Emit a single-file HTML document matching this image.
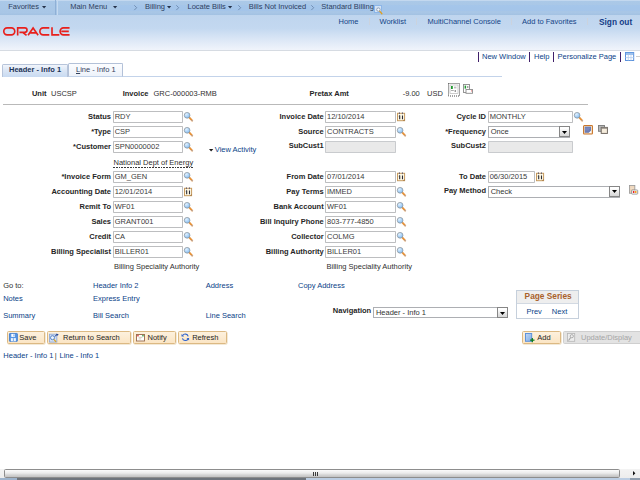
<!DOCTYPE html>
<html><head><meta charset="utf-8"><title>Standard Billing</title><style>
html,body{margin:0;padding:0}
body{width:640px;height:480px;overflow:hidden;background:#fff;position:relative;font-family:"Liberation Sans",sans-serif;font-size:7.5px;color:#303030}
*{box-sizing:border-box}
.a{position:absolute;white-space:nowrap;line-height:12px;height:12px}
.b{font-weight:bold;color:#262626}
.r{text-align:right}
.lk{color:#0b3f88}
.nv{color:#2d405f;font-size:7.5px}
.in{position:absolute;height:11.5px;border:1px solid #bdbec0;border-radius:.8px;background:#fff;line-height:8.8px;padding-left:.8px;color:#3f3f3f;white-space:nowrap;overflow:hidden}
.dis{background:#e9e9e9;border-color:#c9cbce}
.sel{position:absolute;height:11.7px;border:1px solid #adafb3;background:#fff;line-height:9.6px;padding-left:2.4px;color:#3c3c3c;white-space:nowrap}
.sel i{position:absolute;right:-1px;top:-.6px;bottom:-.6px;width:11px;border:1px solid #868686;background:linear-gradient(#fff 15%,#e9e9e9 55%,#d6d6d6)}
.sel i svg{left:2px;top:3.4px}
.btn{position:absolute;top:331px;height:12.7px;border:1px solid #dcb983;background:linear-gradient(#fdf1de,#fbe5c4);border-radius:1.5px;line-height:10.5px;color:#222;white-space:nowrap;font-size:7.5px;box-shadow:.5px .5px 0 #e8d3b0}
.btn.d{border-color:#cfcfcf;background:#e3e3e3;color:#a9a9a9;box-shadow:none}
svg{position:absolute;overflow:visible}
.sep{position:absolute;width:1px;background:#40206a}
</style></head>
<body>
<svg width="0" height="0" style="left:0;top:0"><defs><radialGradient id="lg" cx=".35" cy=".3" r=".8"><stop offset="0" stop-color="#e4f2fe"/><stop offset=".6" stop-color="#a3cff8"/><stop offset="1" stop-color="#7db8f0"/></radialGradient></defs></svg>
<div style="position:absolute;left:0;top:0;width:640px;height:15px;background:linear-gradient(#abc9e8,#a8c6e6 85%,#a2c1e2)"></div>
<div style="position:absolute;left:0;top:0;width:640px;height:1px;background:#c3d8ef"></div>
<div style="position:absolute;left:0;top:15px;width:640px;height:35px;background:linear-gradient(#bfd5ee 0%,#c3d8f0 38%,#d0e0f3 55%,#dfe9f7 75%,#f0f4fb 100%)"></div>
<div style="position:absolute;left:0;top:49.6px;width:640px;height:1px;background:#d6dbe2"></div>
<div style="position:absolute;left:120px;top:4.6px;width:520px;height:6px;background:rgba(150,190,245,.25)"></div>
<div style="position:absolute;left:55px;top:0;width:1px;height:15px;background:#8fb0d6"></div>
<div style="position:absolute;left:56.6px;top:0;width:1px;height:15px;background:#c6daf0"></div>
<div class="a nv" style="left:8.2px;top:1px;">Favorites</div>
<svg style="left:42px;top:6.1px" width="4.2" height="2.5" viewBox="0 0 4.2 2.5"><path d="M0 0h4.2L2.1 2.5z" fill="#25324a"/></svg>
<div class="a nv" style="left:70.2px;top:1px;">Main Menu</div>
<svg style="left:113px;top:6.1px" width="4.2" height="2.5" viewBox="0 0 4.2 2.5"><path d="M0 0h4.2L2.1 2.5z" fill="#25324a"/></svg>
<svg style="left:133.5px;top:4.6px" width="3" height="5.4" viewBox="0 0 3 5.4"><path d="M.3 .3L2.7 2.7L.3 5.1" fill="none" stroke="#6580a5" stroke-width=".8"/></svg>
<div class="a nv" style="left:145px;top:1px;">Billing</div>
<svg style="left:167px;top:6.1px" width="4.2" height="2.5" viewBox="0 0 4.2 2.5"><path d="M0 0h4.2L2.1 2.5z" fill="#25324a"/></svg>
<svg style="left:176px;top:4.6px" width="3" height="5.4" viewBox="0 0 3 5.4"><path d="M.3 .3L2.7 2.7L.3 5.1" fill="none" stroke="#6580a5" stroke-width=".8"/></svg>
<div class="a nv" style="left:187.5px;top:1px;">Locate Bills</div>
<svg style="left:228px;top:6.1px" width="4.2" height="2.5" viewBox="0 0 4.2 2.5"><path d="M0 0h4.2L2.1 2.5z" fill="#25324a"/></svg>
<svg style="left:237.5px;top:4.6px" width="3" height="5.4" viewBox="0 0 3 5.4"><path d="M.3 .3L2.7 2.7L.3 5.1" fill="none" stroke="#6580a5" stroke-width=".8"/></svg>
<div class="a nv" style="left:248.7px;top:1px;">Bills Not Invoiced</div>
<svg style="left:310.7px;top:4.6px" width="3" height="5.4" viewBox="0 0 3 5.4"><path d="M.3 .3L2.7 2.7L.3 5.1" fill="none" stroke="#6580a5" stroke-width=".8"/></svg>
<div class="a nv" style="left:321.3px;top:1px;">Standard Billing</div>
<div style="position:absolute;left:374px;top:5px;width:8px;height:8px;background:#d3e3f6;border:1px solid #8db6e8"></div>
<svg style="left:375.6px;top:6.6px" width="6.4" height="7.2" viewBox="0 0 6.4 7.2"><line x1="3.5" y1="3.9" x2="5.9" y2="6.8" stroke="#e0a020" stroke-width="1.3" stroke-linecap="round"/><circle cx="2.4" cy="2.6" r="1.7" fill="#f4f8fd" stroke="#7d8ea6" stroke-width=".8"/></svg>
<div class="a " style="left:338.5px;top:16px;color:#144486;font-size:7.5px">Home</div>
<div class="a " style="left:379.5px;top:16px;color:#144486;font-size:7.5px">Worklist</div>
<div class="a " style="left:427.5px;top:16px;color:#144486;font-size:7.5px">MultiChannel Console</div>
<div class="a " style="left:522px;top:16px;color:#144486;font-size:7.5px">Add to Favorites</div>
<div class="a " style="left:599px;top:16px;color:#143c86;font-weight:bold;font-size:8.3px">Sign out</div>
<div style="position:absolute;left:368.5px;top:17.5px;width:1px;height:7px;background:#cbd3de"></div>
<div style="position:absolute;left:415.6px;top:17.5px;width:1px;height:7px;background:#cbd3de"></div>
<div style="position:absolute;left:510.6px;top:17.5px;width:1px;height:7px;background:#cbd3de"></div>
<div style="position:absolute;left:587.2px;top:17.5px;width:1px;height:7px;background:#cbd3de"></div>
<svg style="left:3px;top:27.3px" width="65.6" height="9" viewBox="0 0 68 9" preserveAspectRatio="none"><g fill="none" stroke="#e8201c" stroke-width="1.7"><rect x=".8" y=".8" width="11.4" height="7" rx="3.5"/><path d="M15.2 8.4V.8h7.4a2.3 2.3 0 0 1 0 4.6h-5.6M20.4 5.4l4 3"/><path d="M26 8.2L31.2 .9l5.2 7.3M28.2 5.9h6.6"/><path d="M48 .8h-6.3a3.5 3.5 0 0 0 0 7h6.3"/><path d="M50.8 .2v7.6h7.6"/><path d="M69 .8h-6.3a3.5 3.5 0 0 0 0 7h6.3M60.4 4.3h7.8"/></g></svg>
<div class="a lk" style="left:482px;top:51px;">New Window</div>
<div class="a lk" style="left:534px;top:51px;">Help</div>
<div class="a lk" style="left:557.5px;top:51px;">Personalize Page</div>
<div class="sep" style="left:478.3px;top:52px;height:10px"></div>
<div class="sep" style="left:529.3px;top:52px;height:10px"></div>
<div class="sep" style="left:552.8px;top:52px;height:10px"></div>
<div class="sep" style="left:620.3px;top:52px;height:10px"></div>
<svg style="left:625px;top:52px" width="9.2" height="9" viewBox="0 0 9.2 9"><rect x=".5" y=".5" width="8.2" height="8" fill="#fff" stroke="#5b92dc" stroke-width="1"/><rect x=".5" y=".5" width="8.2" height="2.2" fill="#6aa0e4"/><path d="M1 1.7h7.2" stroke="#d6e6fa" stroke-width=".6"/><path d="M.5 5.6h8.2M3.3 2.7v5.8M6 2.7v5.8" stroke="#b5cef0" stroke-width=".8"/></svg><div style="position:absolute;left:635.5px;top:55.8px;width:4.5px;height:1px;background:#cfcfcf"></div>
<div style="position:absolute;left:2px;top:76px;width:500px;height:1px;background:#c3d3ea"></div>
<div style="position:absolute;left:2px;top:64px;width:66px;height:13px;border:1px solid #b7c4da;border-bottom:none;border-radius:1.5px 1.5px 0 0;background:linear-gradient(#f1f5fb,#dbe6f5 45%,#c8daf1)"></div>
<div style="position:absolute;left:68px;top:63px;width:55px;height:14px;border:1px solid #b3c1d8;border-bottom:1px solid #c3d3ea;border-radius:1.5px 1.5px 0 0;background:linear-gradient(#fcfdff,#edf2fa)"></div>
<div class="a " style="left:9px;top:64px;font-weight:bold;color:#1d3357">Header - Info 1</div>
<div class="a " style="left:76px;top:64px;color:#33415c"><u>L</u>ine - Info 1</div>
<div class="a r b" style="left:-153.5px;width:200px;top:88px;">Unit</div>
<div class="a " style="left:51px;top:88px;">USCSP</div>
<div class="a r b" style="left:-51.5px;width:200px;top:88px;">Invoice</div>
<div class="a " style="left:153.5px;top:88px;">GRC-000003-RMB</div>
<div class="a b" style="left:309.5px;top:88px;">Pretax Amt</div>
<div class="a r " style="left:219.8px;width:200px;top:88px;">-9.00</div>
<div class="a " style="left:427px;top:88px;">USD</div>
<svg style="left:448px;top:83.2px" width="12" height="13.5" viewBox="0 0 12 13.5"><rect x=".5" y=".5" width="11" height="12.5" fill="#fff" stroke="#333" stroke-width=".9" stroke-dasharray="1 1"/><rect x="2" y="2" width="8" height="8.5" fill="#fff" stroke="#b8b8b8" stroke-width=".7"/><rect x="3" y="3" width="1.8" height="3" fill="#1f9a2e"/><rect x="6" y="3.6" width="2.4" height="1.8" fill="#bbb"/><rect x="3" y="7" width="2.8" height=".8" fill="#999"/><rect x="6.6" y="7" width="1.4" height="2" fill="#999"/></svg>
<svg style="left:463px;top:84px" width="10" height="10" viewBox="0 0 10 10"><rect x=".5" y=".5" width="6" height="8" fill="#fff" stroke="#8a8a8a" stroke-width=".9"/><rect x="1.6" y="1.6" width="1.5" height="3" fill="#1f9a2e"/><rect x="4" y="2.2" width="1.4" height="1.6" fill="#888"/><rect x="3" y="5.5" width="6.5" height="3.8" fill="#fff" stroke="#8a8a8a" stroke-width=".9"/><rect x="8" y="6.2" width=".9" height="1.4" fill="#e88"/></svg>
<div style="position:absolute;left:3px;top:104px;width:585px;height:1px;background:#b9b9b9"></div>
<div class="a r b" style="left:-89px;width:200px;top:111px;">Status</div>
<div class="in " style="left:113px;top:111.1px;width:70px"></div>
<div class="a" style="left:114.7px;top:111px;color:#3a3a3a">RDY</div>
<svg style="left:184px;top:112.3px" width="9" height="10" viewBox="0 0 9 10"><line x1="5.2" y1="5.4" x2="8.2" y2="8.6" stroke="#e6923a" stroke-width="1.9" stroke-linecap="round"/><circle cx="8.1" cy="8.6" r=".7" fill="#a9b0c8"/><circle cx="3.1" cy="3.3" r="2.85" fill="url(#lg)" stroke="#8f989f" stroke-width=".8"/></svg>
<div class="a r b" style="left:-89px;width:200px;top:126px;">*Type</div>
<div class="in " style="left:113px;top:126.1px;width:70px"></div>
<div class="a" style="left:114.7px;top:126px;color:#3a3a3a">CSP</div>
<svg style="left:184px;top:127.3px" width="9" height="10" viewBox="0 0 9 10"><line x1="5.2" y1="5.4" x2="8.2" y2="8.6" stroke="#e6923a" stroke-width="1.9" stroke-linecap="round"/><circle cx="8.1" cy="8.6" r=".7" fill="#a9b0c8"/><circle cx="3.1" cy="3.3" r="2.85" fill="url(#lg)" stroke="#8f989f" stroke-width=".8"/></svg>
<div class="a r b" style="left:-89px;width:200px;top:141px;">*Customer</div>
<div class="in " style="left:113px;top:141.1px;width:70px"></div>
<div class="a" style="left:114.7px;top:141px;color:#3a3a3a">SPN0000002</div>
<svg style="left:184px;top:142.29999999999998px" width="9" height="10" viewBox="0 0 9 10"><line x1="5.2" y1="5.4" x2="8.2" y2="8.6" stroke="#e6923a" stroke-width="1.9" stroke-linecap="round"/><circle cx="8.1" cy="8.6" r=".7" fill="#a9b0c8"/><circle cx="3.1" cy="3.3" r="2.85" fill="url(#lg)" stroke="#8f989f" stroke-width=".8"/></svg>
<div class="a r b" style="left:-89px;width:200px;top:171px;">*Invoice Form</div>
<div class="in " style="left:113px;top:171.1px;width:70px"></div>
<div class="a" style="left:114.7px;top:171px;color:#3a3a3a">GM_GEN</div>
<svg style="left:184px;top:172.29999999999998px" width="9" height="10" viewBox="0 0 9 10"><line x1="5.2" y1="5.4" x2="8.2" y2="8.6" stroke="#e6923a" stroke-width="1.9" stroke-linecap="round"/><circle cx="8.1" cy="8.6" r=".7" fill="#a9b0c8"/><circle cx="3.1" cy="3.3" r="2.85" fill="url(#lg)" stroke="#8f989f" stroke-width=".8"/></svg>
<div class="a r b" style="left:-89px;width:200px;top:186px;">Accounting Date</div>
<div class="in " style="left:113px;top:186.1px;width:70px"></div>
<div class="a" style="left:114.7px;top:186px;color:#3a3a3a">12/01/2014</div>
<svg style="left:184px;top:187.0px" width="8.2" height="9.3" viewBox="0 0 8.2 9.3"><rect x=".5" y="1.3" width="7.1" height="7.4" fill="#fffae6" stroke="#c79b60" stroke-width="1"/><rect x="1.9" y=".4" width="1.1" height="1.7" fill="#6b6570"/><rect x="4.9" y=".4" width="1.1" height="1.7" fill="#6b6570"/><path d="M2.7 3.5v3.7M5.5 3.5v3.7" stroke="#2b2b35" stroke-width="1.1" fill="none"/><path d="M1.8 4.1l.9-.6" stroke="#1d1d27" stroke-width=".7"/><path d="M5.9 8.7l1.7-1.7v1.7z" fill="#9c6b38"/></svg>
<div class="a r b" style="left:-89px;width:200px;top:201px;">Remit To</div>
<div class="in " style="left:113px;top:201.1px;width:70px"></div>
<div class="a" style="left:114.7px;top:201px;color:#3a3a3a">WF01</div>
<svg style="left:184px;top:202.29999999999998px" width="9" height="10" viewBox="0 0 9 10"><line x1="5.2" y1="5.4" x2="8.2" y2="8.6" stroke="#e6923a" stroke-width="1.9" stroke-linecap="round"/><circle cx="8.1" cy="8.6" r=".7" fill="#a9b0c8"/><circle cx="3.1" cy="3.3" r="2.85" fill="url(#lg)" stroke="#8f989f" stroke-width=".8"/></svg>
<div class="a r b" style="left:-89px;width:200px;top:216px;">Sales</div>
<div class="in " style="left:113px;top:216.1px;width:70px"></div>
<div class="a" style="left:114.7px;top:216px;color:#3a3a3a">GRANT001</div>
<svg style="left:184px;top:217.29999999999998px" width="9" height="10" viewBox="0 0 9 10"><line x1="5.2" y1="5.4" x2="8.2" y2="8.6" stroke="#e6923a" stroke-width="1.9" stroke-linecap="round"/><circle cx="8.1" cy="8.6" r=".7" fill="#a9b0c8"/><circle cx="3.1" cy="3.3" r="2.85" fill="url(#lg)" stroke="#8f989f" stroke-width=".8"/></svg>
<div class="a r b" style="left:-89px;width:200px;top:231px;">Credit</div>
<div class="in " style="left:113px;top:231.1px;width:70px"></div>
<div class="a" style="left:114.7px;top:231px;color:#3a3a3a">CA</div>
<svg style="left:184px;top:232.29999999999998px" width="9" height="10" viewBox="0 0 9 10"><line x1="5.2" y1="5.4" x2="8.2" y2="8.6" stroke="#e6923a" stroke-width="1.9" stroke-linecap="round"/><circle cx="8.1" cy="8.6" r=".7" fill="#a9b0c8"/><circle cx="3.1" cy="3.3" r="2.85" fill="url(#lg)" stroke="#8f989f" stroke-width=".8"/></svg>
<div class="a r b" style="left:-89px;width:200px;top:246px;">Billing Specialist</div>
<div class="in " style="left:113px;top:246.1px;width:70px"></div>
<div class="a" style="left:114.7px;top:246px;color:#3a3a3a">BILLER01</div>
<svg style="left:184px;top:247.29999999999998px" width="9" height="10" viewBox="0 0 9 10"><line x1="5.2" y1="5.4" x2="8.2" y2="8.6" stroke="#e6923a" stroke-width="1.9" stroke-linecap="round"/><circle cx="8.1" cy="8.6" r=".7" fill="#a9b0c8"/><circle cx="3.1" cy="3.3" r="2.85" fill="url(#lg)" stroke="#8f989f" stroke-width=".8"/></svg>
<div class="a " style="left:113.5px;top:157px;">National Dept of Energy</div>
<div style="position:absolute;left:113.2px;top:167px;width:80px;height:1px;background:repeating-linear-gradient(90deg,#3a3a3a 0,#3a3a3a 1.9px,transparent 1.9px,transparent 2.8px)"></div>
<div class="a " style="left:113.9px;top:261px;">Billing Speciality Authority</div>
<svg style="left:208.9px;top:149.0px" width="4.3" height="2.6" viewBox="0 0 4.3 2.6"><path d="M0 0h4.3L2.15 2.6z" fill="#1a1a1a"/></svg>
<div class="a lk" style="left:214.8px;top:144px;">View Activity</div>
<div class="a r b" style="left:123.7px;width:200px;top:111px;">Invoice Date</div>
<div class="in " style="left:325.3px;top:111.1px;width:70.3px"></div>
<div class="a" style="left:327.0px;top:111px;color:#3a3a3a">12/10/2014</div>
<svg style="left:397px;top:112.0px" width="8.2" height="9.3" viewBox="0 0 8.2 9.3"><rect x=".5" y="1.3" width="7.1" height="7.4" fill="#fffae6" stroke="#c79b60" stroke-width="1"/><rect x="1.9" y=".4" width="1.1" height="1.7" fill="#6b6570"/><rect x="4.9" y=".4" width="1.1" height="1.7" fill="#6b6570"/><path d="M2.7 3.5v3.7M5.5 3.5v3.7" stroke="#2b2b35" stroke-width="1.1" fill="none"/><path d="M1.8 4.1l.9-.6" stroke="#1d1d27" stroke-width=".7"/><path d="M5.9 8.7l1.7-1.7v1.7z" fill="#9c6b38"/></svg>
<div class="a r b" style="left:123.7px;width:200px;top:126px;">Source</div>
<div class="in " style="left:325.3px;top:126.1px;width:70.3px"></div>
<div class="a" style="left:327.0px;top:126px;color:#3a3a3a">CONTRACTS</div>
<svg style="left:397px;top:127.3px" width="9" height="10" viewBox="0 0 9 10"><line x1="5.2" y1="5.4" x2="8.2" y2="8.6" stroke="#e6923a" stroke-width="1.9" stroke-linecap="round"/><circle cx="8.1" cy="8.6" r=".7" fill="#a9b0c8"/><circle cx="3.1" cy="3.3" r="2.85" fill="url(#lg)" stroke="#8f989f" stroke-width=".8"/></svg>
<div class="a r b" style="left:123.7px;width:200px;top:140px;">SubCust1</div>
<div class="in dis" style="left:325.3px;top:141.1px;width:70.3px"></div>
<div class="a r b" style="left:123.7px;width:200px;top:171px;">From Date</div>
<div class="in " style="left:325.3px;top:171.1px;width:70.3px"></div>
<div class="a" style="left:327.0px;top:171px;color:#3a3a3a">07/01/2014</div>
<svg style="left:397px;top:172.0px" width="8.2" height="9.3" viewBox="0 0 8.2 9.3"><rect x=".5" y="1.3" width="7.1" height="7.4" fill="#fffae6" stroke="#c79b60" stroke-width="1"/><rect x="1.9" y=".4" width="1.1" height="1.7" fill="#6b6570"/><rect x="4.9" y=".4" width="1.1" height="1.7" fill="#6b6570"/><path d="M2.7 3.5v3.7M5.5 3.5v3.7" stroke="#2b2b35" stroke-width="1.1" fill="none"/><path d="M1.8 4.1l.9-.6" stroke="#1d1d27" stroke-width=".7"/><path d="M5.9 8.7l1.7-1.7v1.7z" fill="#9c6b38"/></svg>
<div class="a r b" style="left:123.7px;width:200px;top:186px;">Pay Terms</div>
<div class="in " style="left:325.3px;top:186.1px;width:70.3px"></div>
<div class="a" style="left:327.0px;top:186px;color:#3a3a3a">IMMED</div>
<svg style="left:397px;top:187.29999999999998px" width="9" height="10" viewBox="0 0 9 10"><line x1="5.2" y1="5.4" x2="8.2" y2="8.6" stroke="#e6923a" stroke-width="1.9" stroke-linecap="round"/><circle cx="8.1" cy="8.6" r=".7" fill="#a9b0c8"/><circle cx="3.1" cy="3.3" r="2.85" fill="url(#lg)" stroke="#8f989f" stroke-width=".8"/></svg>
<div class="a r b" style="left:123.7px;width:200px;top:201px;">Bank Account</div>
<div class="in " style="left:325.3px;top:201.1px;width:70.3px"></div>
<div class="a" style="left:327.0px;top:201px;color:#3a3a3a">WF01</div>
<svg style="left:397px;top:202.29999999999998px" width="9" height="10" viewBox="0 0 9 10"><line x1="5.2" y1="5.4" x2="8.2" y2="8.6" stroke="#e6923a" stroke-width="1.9" stroke-linecap="round"/><circle cx="8.1" cy="8.6" r=".7" fill="#a9b0c8"/><circle cx="3.1" cy="3.3" r="2.85" fill="url(#lg)" stroke="#8f989f" stroke-width=".8"/></svg>
<div class="a r b" style="left:123.7px;width:200px;top:216px;">Bill Inquiry Phone</div>
<div class="in " style="left:325.3px;top:216.1px;width:70.3px"></div>
<div class="a" style="left:327.0px;top:216px;color:#3a3a3a">803-777-4850</div>
<svg style="left:397px;top:217.29999999999998px" width="9" height="10" viewBox="0 0 9 10"><line x1="5.2" y1="5.4" x2="8.2" y2="8.6" stroke="#e6923a" stroke-width="1.9" stroke-linecap="round"/><circle cx="8.1" cy="8.6" r=".7" fill="#a9b0c8"/><circle cx="3.1" cy="3.3" r="2.85" fill="url(#lg)" stroke="#8f989f" stroke-width=".8"/></svg>
<div class="a r b" style="left:123.7px;width:200px;top:231px;">Collector</div>
<div class="in " style="left:325.3px;top:231.1px;width:70.3px"></div>
<div class="a" style="left:327.0px;top:231px;color:#3a3a3a">COLMG</div>
<svg style="left:397px;top:232.29999999999998px" width="9" height="10" viewBox="0 0 9 10"><line x1="5.2" y1="5.4" x2="8.2" y2="8.6" stroke="#e6923a" stroke-width="1.9" stroke-linecap="round"/><circle cx="8.1" cy="8.6" r=".7" fill="#a9b0c8"/><circle cx="3.1" cy="3.3" r="2.85" fill="url(#lg)" stroke="#8f989f" stroke-width=".8"/></svg>
<div class="a r b" style="left:123.7px;width:200px;top:246px;">Billing Authority</div>
<div class="in " style="left:325.3px;top:246.1px;width:70.3px"></div>
<div class="a" style="left:327.0px;top:246px;color:#3a3a3a">BILLER01</div>
<svg style="left:397px;top:247.29999999999998px" width="9" height="10" viewBox="0 0 9 10"><line x1="5.2" y1="5.4" x2="8.2" y2="8.6" stroke="#e6923a" stroke-width="1.9" stroke-linecap="round"/><circle cx="8.1" cy="8.6" r=".7" fill="#a9b0c8"/><circle cx="3.1" cy="3.3" r="2.85" fill="url(#lg)" stroke="#8f989f" stroke-width=".8"/></svg>
<div class="a " style="left:326.5px;top:261px;">Billing Speciality Authority</div>
<div class="a r b" style="left:286px;width:200px;top:111px;">Cycle ID</div>
<div class="in " style="left:488px;top:111.1px;width:84.8px"></div>
<div class="a" style="left:489.7px;top:111px;color:#3a3a3a">MONTHLY</div>
<svg style="left:574px;top:112.3px" width="9" height="10" viewBox="0 0 9 10"><line x1="5.2" y1="5.4" x2="8.2" y2="8.6" stroke="#e6923a" stroke-width="1.9" stroke-linecap="round"/><circle cx="8.1" cy="8.6" r=".7" fill="#a9b0c8"/><circle cx="3.1" cy="3.3" r="2.85" fill="url(#lg)" stroke="#8f989f" stroke-width=".8"/></svg>
<div class="a r b" style="left:286px;width:200px;top:126px;">*Frequency</div>
<div class="sel" style="left:488px;top:126px;width:82px"><i><svg width="5" height="3" viewBox="0 0 5 3"><path d="M0 0h5L2.5 3z" fill="#000"/></svg></i></div>
<div class="a " style="left:490.7px;top:126px;color:#333">Once</div>
<div class="a r b" style="left:286px;width:200px;top:140px;">SubCust2</div>
<div class="in dis" style="left:488px;top:141.1px;width:84.8px"></div>
<div class="a r b" style="left:286px;width:200px;top:171px;">To Date</div>
<div class="in " style="left:488px;top:171.1px;width:46.5px"></div>
<div class="a" style="left:489.7px;top:171px;color:#3a3a3a">06/30/2015</div>
<svg style="left:536px;top:172.0px" width="8.2" height="9.3" viewBox="0 0 8.2 9.3"><rect x=".5" y="1.3" width="7.1" height="7.4" fill="#fffae6" stroke="#c79b60" stroke-width="1"/><rect x="1.9" y=".4" width="1.1" height="1.7" fill="#6b6570"/><rect x="4.9" y=".4" width="1.1" height="1.7" fill="#6b6570"/><path d="M2.7 3.5v3.7M5.5 3.5v3.7" stroke="#2b2b35" stroke-width="1.1" fill="none"/><path d="M1.8 4.1l.9-.6" stroke="#1d1d27" stroke-width=".7"/><path d="M5.9 8.7l1.7-1.7v1.7z" fill="#9c6b38"/></svg>
<div class="a r b" style="left:286px;width:200px;top:185px;">Pay Method</div>
<div class="sel" style="left:488px;top:185.6px;width:132px;height:12px"><i><svg width="5" height="3" viewBox="0 0 5 3"><path d="M0 0h5L2.5 3z" fill="#000"/></svg></i></div>
<div class="a " style="left:490.7px;top:186px;color:#333">Check</div>
<svg style="left:583px;top:125px" width="10" height="9.6" viewBox="0 0 10 9.6"><rect x=".55" y=".55" width="8.9" height="8.5" rx=".8" fill="#f7e3c6" stroke="#c9762c" stroke-width="1.05"/><rect x="1.7" y="1.6" width="6.3" height="6.2" fill="#6c7cb3"/><path d="M2 3.2h5M2 4.8h4" stroke="#8d9bd0" stroke-width=".6"/><path d="M5.6 7.9l2.5-2.5v2.5z" fill="#fff"/></svg>
<svg style="left:598.2px;top:125.3px" width="10" height="9" viewBox="0 0 10 9"><rect x=".5" y=".5" width="6" height="5.8" fill="#b9b9b9" stroke="#7a7a7a" stroke-width=".9"/><rect x="3.2" y="2.4" width="6.2" height="6" fill="#f5ecdc" stroke="#6a625a" stroke-width=".95"/><rect x="3.2" y="2.4" width="6.2" height="1.3" fill="#8a857f"/></svg>
<svg style="left:628.9px;top:185.2px" width="9.2" height="9.6" viewBox="0 0 9.2 9.6"><rect x=".45" y=".45" width="5.4" height="7.8" fill="#ecd2b6" stroke="#9a9a9a" stroke-width=".85"/><path d="M1.4 2h3.4M1.4 3.6h3.4" stroke="#f6e6d4" stroke-width=".7"/><rect x="2.6" y="5" width="6.1" height="4.1" rx=".6" fill="#fff" stroke="#8c8c8c" stroke-width=".85"/><rect x="3.9" y="6" width="1.5" height="2" fill="#e5202a"/><rect x="5.9" y="6" width="1.6" height="2" fill="#f1a21c"/></svg>
<div class="a " style="left:3.2px;top:280px;">Go to:</div>
<div class="a lk" style="left:93px;top:280px;">Header Info 2</div>
<div class="a lk" style="left:205.7px;top:280px;">Address</div>
<div class="a lk" style="left:298px;top:280px;">Copy Address</div>
<div class="a lk" style="left:3.2px;top:293px;">Notes</div>
<div class="a lk" style="left:93px;top:293px;">Express Entry</div>
<div class="a lk" style="left:3.2px;top:310px;">Summary</div>
<div class="a lk" style="left:93px;top:310px;">Bill Search</div>
<div class="a lk" style="left:205.7px;top:310px;">Line Search</div>
<div class="a r b" style="left:171.2px;width:200px;top:305px;">Navigation</div>
<div class="sel" style="left:373px;top:307px;width:135px;height:11px"><i><svg width="5" height="3" viewBox="0 0 5 3"><path d="M0 0h5L2.5 3z" fill="#000"/></svg></i></div>
<div class="a " style="left:375.9px;top:307px;color:#333">Header - Info 1</div>
<div style="position:absolute;left:515.6px;top:290.3px;width:63.5px;height:28.6px;border:1px solid #c6d0dc;background:#fff"></div>
<div style="position:absolute;left:516.6px;top:291.3px;width:61.5px;height:13.2px;background:#eeeeee;border-bottom:1px solid #d2d9e2"></div>
<div class="a " style="left:524.6px;top:290px;font-weight:bold;font-size:8.3px;color:#a9612a">Page Series</div>
<div class="a lk" style="left:526.4px;top:306px;">Prev</div>
<div class="a lk" style="left:551.8px;top:306px;">Next</div>
<div class="btn " style="left:7px;width:37.5px"><svg style="left:.9px;top:.9px" width="8.8" height="8.8" viewBox="0 0 8.8 8.8"><rect x=".45" y=".45" width="7.9" height="7.9" rx=".5" fill="#5a97e4" stroke="#3f7ccc" stroke-width=".9"/><rect x="2.3" y=".9" width="3.6" height="3" fill="#fff"/><rect x="4.5" y="1.3" width=".9" height="2" fill="#5a97e4"/><rect x="1.9" y="5.1" width="5" height="3.2" fill="#edf4fc"/><rect x="3.9" y="5.1" width="1" height="3.2" fill="#7fb0ec"/></svg></div>
<div class="a " style="left:19.3px;top:332px;color:#1f1f1f">Save</div>
<div class="btn " style="left:47px;width:83.5px"><svg style="left:1.4px;top:.5px" width="10.4" height="9.6" viewBox="0 0 10.4 9.6"><rect x=".45" y="1.2" width="7.4" height="7.9" fill="#d3dff3" stroke="#93abd6" stroke-width=".9"/><circle cx="3.5" cy="4.7" r="2" fill="#eef5fd" stroke="#4a79c2" stroke-width=".9"/><line x1="4.9" y1="6.3" x2="7" y2="8.9" stroke="#d9a21f" stroke-width="1.3"/><path d="M6 3.6C6.3 2.2 7.4 1.5 8.6 1.6" stroke="#1c3d8f" stroke-width=".9" fill="none"/><path d="M7.6 .4l2.2 1.3-2.2 1.3z" fill="#1c3d8f"/></svg></div>
<div class="a " style="left:63px;top:332px;color:#1f1f1f">Return to Search</div>
<div class="btn " style="left:133px;width:42.5px"><svg style="left:2px;top:1.9px" width="9" height="7.6" viewBox="0 0 9 7.6"><rect x=".5" y=".5" width="8" height="6.5" fill="#fff" stroke="#9a6e50" stroke-width=".95"/><path d="M2.6 3.3h3.8M2.6 4.9h2.6" stroke="#b9b09a" stroke-width=".7"/><rect x="1.2" y="1.1" width="1.5" height="1.3" fill="#d8302a"/><rect x="6.2" y="1.1" width="1.5" height="1.3" fill="#2f9a3a"/></svg></div>
<div class="a " style="left:147.5px;top:332px;color:#1f1f1f">Notify</div>
<div class="btn " style="left:178px;width:49px"><svg style="left:2.2px;top:1.2px" width="8.6" height="8.6" viewBox="0 0 8.6 8.6"><path d="M7.2 3.3A3.1 3.1 0 0 0 1.6 2.5M1.4 5.3A3.1 3.1 0 0 0 7 6.1" fill="none" stroke="#2f63cc" stroke-width="1.15"/><path d="M.5 1v2.6h2.6zM8.1 7.6V5H5.5z" fill="#2f63cc"/></svg></div>
<div class="a " style="left:192.2px;top:332px;color:#1f1f1f">Refresh</div>
<div class="btn " style="left:522.3px;width:38.6px"><svg style="left:1.8px;top:.7px" width="10" height="9.8" viewBox="0 0 10 9.8"><defs><linearGradient id="ag" x1="0" y1="0" x2="1" y2="1"><stop offset="0" stop-color="#c3d8f4"/><stop offset="1" stop-color="#7eabe4"/></linearGradient></defs><rect x=".5" y=".5" width="6.2" height="7.8" fill="url(#ag)" stroke="#5a8fda" stroke-width=".95"/><path d="M7.3 4.9v4.4M5.1 7.1h4.4" stroke="#0a7a1c" stroke-width="1.25"/></svg></div>
<div class="a " style="left:537.3px;top:332px;color:#1f1f1f">Add</div>
<div class="btn d" style="left:563px;width:80px"><svg style="left:3px;top:1px" width="8.5" height="9" viewBox="0 0 8.5 9"><rect x=".5" y=".5" width="7.2" height="7.8" fill="#ededed" stroke="#b5b5b5" stroke-width=".8"/><circle cx="4.8" cy="3.2" r="1.6" fill="none" stroke="#9f9f9f" stroke-width=".8"/><path d="M3.7 4.5L1.5 7.5" stroke="#9f9f9f" stroke-width="1.1"/></svg></div>
<div class="a " style="left:581px;top:332px;color:#a6a6a6">Update/Display</div>
<div class="a lk" style="left:3.3px;top:350px;">Header - Info 1</div>
<div class="a " style="left:54.7px;top:350px;color:#333">|</div>
<div class="a lk" style="left:59.5px;top:350px;">Line - Info 1</div>
<div style="position:absolute;left:0;top:469px;width:640px;height:9.5px;background:linear-gradient(#f3f3f3,#ececec)"></div>
<div style="position:absolute;left:4px;top:468.7px;width:615.5px;height:9.7px;border:1px solid #8d8d8d;border-radius:1.6px;background:linear-gradient(#fbfbfb 0%,#ebebeb 45%,#d4d4d4 70%,#c2c2c2 100%)"></div>
<div style="position:absolute;left:313px;top:471.8px;width:.9px;height:4px;background:#3a3a3a"></div>
<div style="position:absolute;left:315px;top:471.8px;width:.9px;height:4px;background:#3a3a3a"></div>
<div style="position:absolute;left:317px;top:471.8px;width:.9px;height:4px;background:#3a3a3a"></div>
<svg style="left:633.4px;top:471.4px" width="2.4" height="4.4" viewBox="0 0 2.4 4.4"><path d="M0 0L2.4 2.2L0 4.4z" fill="#111"/></svg>
<div style="position:absolute;left:0;top:478.4px;width:640px;height:1.6px;background:linear-gradient(90deg,#9db3cc 0,#9db3cc 17px,#6e747c 17px,#6e747c 305.6px,#bccde2 305.6px,#bccde2 630px,#8f9dad 630px)"></div>
</body></html>
